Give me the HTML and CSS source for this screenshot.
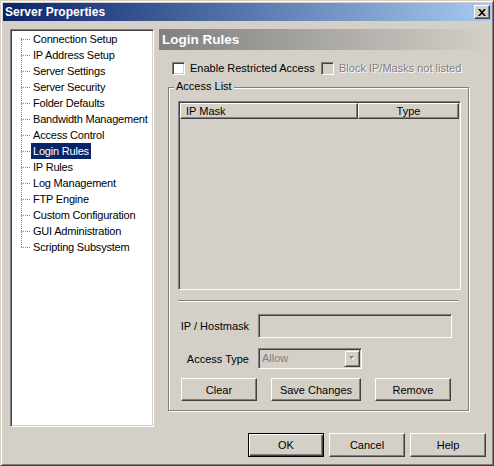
FILE: index.html
```html
<!DOCTYPE html>
<html>
<head>
<meta charset="utf-8">
<title>Server Properties</title>
<link rel="stylesheet" href="styles.css">
</head>
<body>
<div class="window">
  <div class="titlebar">
    <span class="title">Server Properties</span>
    <button class="close" aria-label="Close">
      <svg width="8" height="7" viewBox="0 0 8 7"><path d="M0 0h2l2 2.2L6 0h2L5 3.5 8 7H6L4 4.8 2 7H0l3-3.5z" fill="#000"/></svg>
    </button>
  </div>
  <div class="main">
    <div class="tree">
      <ul class="tree-list">
        <li><span class="branch"></span><span class="label">Connection Setup</span></li>
        <li><span class="branch"></span><span class="label">IP Address Setup</span></li>
        <li><span class="branch"></span><span class="label">Server Settings</span></li>
        <li><span class="branch"></span><span class="label">Server Security</span></li>
        <li><span class="branch"></span><span class="label">Folder Defaults</span></li>
        <li><span class="branch"></span><span class="label">Bandwidth Management</span></li>
        <li><span class="branch"></span><span class="label">Access Control</span></li>
        <li><span class="branch"></span><span class="label selected">Login Rules</span></li>
        <li><span class="branch"></span><span class="label">IP Rules</span></li>
        <li><span class="branch"></span><span class="label">Log Management</span></li>
        <li><span class="branch"></span><span class="label">FTP Engine</span></li>
        <li><span class="branch"></span><span class="label">Custom Configuration</span></li>
        <li><span class="branch"></span><span class="label">GUI Administration</span></li>
        <li><span class="branch"></span><span class="label">Scripting Subsystem</span></li>
      </ul>
    </div>
    <div class="panel">
      <div class="header">Login Rules</div>
      <div class="checks">
        <label class="check check-first"><span class="box"></span>Enable Restricted Access</label>
        <label class="check disabled"><span class="box"></span>Block IP/Masks not listed</label>
      </div>
      <div class="group">
        <span class="legend">Access List</span>
        <div class="listview">
          <div class="lv-head">
            <div class="col col-mask">IP Mask</div>
            <div class="col col-type">Type</div>
          </div>
        </div>
        <div class="sep"></div>
        <div class="field-row row-host">
          <span class="field-label">IP / Hostmask</span>
          <div class="textbox"></div>
        </div>
        <div class="field-row row-type">
          <span class="field-label">Access Type</span>
          <div class="combo">
            <span class="combo-text">Allow</span>
            <span class="combo-btn">
              <svg width="7" height="5" viewBox="0 0 7 5"><path d="M1 1h5L3.5 4z" fill="#fff"/><path d="M0 0h5L2.5 3z" fill="#808080"/></svg>
            </span>
          </div>
        </div>
        <div class="btn-row">
          <button class="btn btn-small">Clear</button>
          <button class="btn btn-wide">Save Changes</button>
          <button class="btn btn-small">Remove</button>
        </div>
      </div>
    </div>
  </div>
  <div class="footer">
    <button class="btn btn-foot default">OK</button>
    <button class="btn btn-foot">Cancel</button>
    <button class="btn btn-foot">Help</button>
  </div>
</div>
</body>
</html>
```

FILE: styles.css
```css
* { box-sizing: border-box; }
html, body { margin: 0; padding: 0; }
body {
  background: #D4D0C8;
  font-family: "Liberation Sans", Arial, sans-serif;
  font-size: 11px;
  color: #000;
}
.window {
  width: 494px;
  height: 466px;
  background: #D4D0C8;
  border: 1px solid;
  border-color: #D4D0C8 #404040 #404040 #D4D0C8;
  box-shadow: inset 1px 1px 0 #fff, inset -1px -1px 0 #808080;
  padding: 2px;
  display: flex;
  flex-direction: column;
}
.titlebar {
  height: 18px;
  background: linear-gradient(to right, #0A246A, #A6CAF0);
  display: flex;
  align-items: center;
  justify-content: space-between;
  padding: 0 1px 0 2px;
}
.title {
  color: #fff;
  font-weight: bold;
  font-size: 12px;
  line-height: 18px;
}
.close {
  width: 16px;
  height: 14px;
  padding: 0;
  margin: 0;
  background: #D4D0C8;
  border: 1px solid;
  border-color: #fff #404040 #404040 #fff;
  box-shadow: inset -1px -1px 0 #808080;
  display: flex;
  align-items: center;
  justify-content: center;
}
.close svg { display: block; }

.main {
  display: flex;
  gap: 5px;
  margin-top: 8px;
  padding-left: 7px;
}
.tree {
  width: 144px;
  height: 398px;
  flex: none;
  background: #fff;
  border: 1px solid;
  border-color: #808080 #fff #fff #808080;
  box-shadow: inset 1px 1px 0 #404040, inset -1px -1px 0 #D4D0C8;
  padding: 1px 2px 2px 2px;
  overflow: hidden;
}
.tree-list {
  list-style: none;
  margin: 0;
  padding: 0;
  background: repeating-linear-gradient(to bottom, #808080 0 1px, transparent 1px 2px) 8px 7px / 1px 209px no-repeat;
}
.tree-list li {
  display: flex;
  align-items: center;
  height: 16px;
  padding-left: 8px;
}
.branch {
  flex: none;
  width: 10px;
  height: 1px;
  background: repeating-linear-gradient(to right, #808080 0 1px, transparent 1px 2px);
}
.label {
  flex: none;
  padding: 0 2px;
  line-height: 16px;
  white-space: nowrap;
  letter-spacing: -0.2px;
}
.label.selected {
  background: #0A246A;
  color: #fff;
}

.panel {
  flex: 1;
  display: flex;
  flex-direction: column;
}
.header {
  height: 21px;
  line-height: 21px;
  padding-left: 3px;
  background: linear-gradient(to right, #808080, #D4D0C8);
  color: #fff;
  font-weight: bold;
  font-size: 13.5px;
}
.checks {
  display: flex;
  margin-top: 12px;
  padding-left: 13px;
  height: 13px;
}
.check {
  display: flex;
  align-items: center;
  gap: 5px;
  line-height: 13px;
  white-space: nowrap;
}
.check-first { width: 149px; flex: none; }
.box {
  width: 13px;
  height: 13px;
  background: #fff;
  border: 1px solid;
  border-color: #808080 #fff #fff #808080;
  box-shadow: inset 1px 1px 0 #404040, inset -1px -1px 0 #D4D0C8;
  flex: none;
}
.check.disabled { color: #808080; text-shadow: 1px 1px 0 #fff; }
.check.disabled .box { background: #D4D0C8; }

.group {
  position: relative;
  margin-top: 12px;
  margin-left: 9px;
  width: 301px;
  height: 324px;
  border: 1px solid #808080;
  box-shadow: inset 1px 1px 0 #fff, 1px 1px 0 #fff;
  padding: 13px 0 0 9px;
}
.legend {
  position: absolute;
  top: -8px;
  left: 5px;
  padding: 0 2px;
  line-height: 13px;
  background: #D4D0C8;
}
.listview {
  width: 283px;
  height: 189px;
  background: #D4D0C8;
  border: 1px solid;
  border-color: #808080 #fff #fff #808080;
  box-shadow: inset 1px 1px 0 #404040, inset -1px -1px 0 #D4D0C8;
  padding: 1px;
}
.lv-head {
  display: flex;
  height: 16px;
}
.col {
  height: 16px;
  line-height: 14px;
  border: 1px solid;
  border-color: #fff #404040 #404040 #fff;
  box-shadow: inset -1px -1px 0 #808080;
}
.col-mask { width: 178px; padding-left: 5px; }
.col-type { width: 101px; text-align: center; }
.sep {
  width: 280px;
  margin-top: 10px;
  border-top: 1px solid #808080;
  border-bottom: 1px solid #fff;
}
.field-row {
  display: flex;
  align-items: center;
  gap: 9px;
}
.field-label {
  width: 71px;
  flex: none;
  text-align: right;
  white-space: nowrap;
}
.row-host { margin-top: 12px; }
.row-type { margin-top: 10px; }
.textbox {
  width: 194px;
  height: 24px;
  background: #D4D0C8;
  border: 1px solid;
  border-color: #808080 #fff #fff #808080;
  box-shadow: inset 1px 1px 0 #404040, inset -1px -1px 0 #D4D0C8;
}
.combo {
  width: 104px;
  height: 21px;
  background: #D4D0C8;
  border: 1px solid;
  border-color: #808080 #fff #fff #808080;
  box-shadow: inset 1px 1px 0 #404040, inset -1px -1px 0 #D4D0C8;
  padding: 2px;
  display: flex;
  align-items: center;
  justify-content: space-between;
}
.combo-text {
  color: #808080;
  padding-left: 1px;
  line-height: 15px;
}
.combo-btn {
  width: 16px;
  height: 17px;
  margin-right: -1px;
  border: 1px solid;
  border-color: #D4D0C8 #404040 #404040 #D4D0C8;
  box-shadow: inset 1px 1px 0 #fff, inset -1px -1px 0 #808080;
  display: flex;
  align-items: center;
  justify-content: center;
}
.combo-btn svg { display: block; margin-left: 1px; }
.btn-row {
  display: flex;
  gap: 14px;
  margin-top: 9px;
  padding-left: 3px;
}
.btn {
  font-family: "Liberation Sans", Arial, sans-serif;
  font-size: 11px;
  color: #000;
  background: #D4D0C8;
  border: 1px solid;
  border-color: #fff #404040 #404040 #fff;
  box-shadow: inset -1px -1px 0 #808080;
  padding: 0;
  margin: 0;
  height: 23px;
}
.btn-small { width: 76px; }
.btn-wide { width: 90px; }
.footer {
  display: flex;
  justify-content: flex-end;
  gap: 5px;
  margin-top: 6px;
  padding-right: 5px;
}
.btn-foot { width: 76px; height: 24px; }
.btn.default {
  border: 1px solid #000;
  box-shadow: inset 1px 1px 0 #fff, inset -1px -1px 0 #404040, inset -2px -2px 0 #808080;
}
```
